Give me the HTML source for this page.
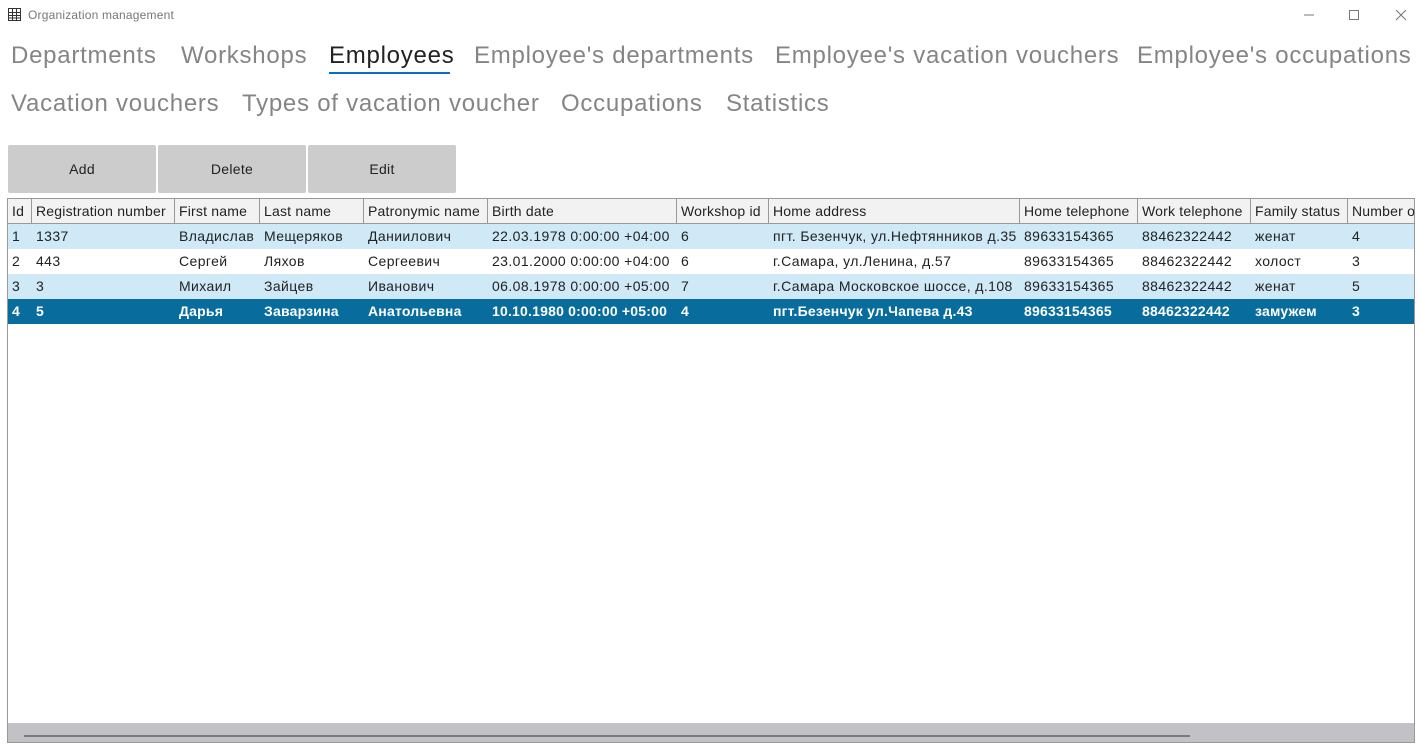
<!DOCTYPE html>
<html><head><meta charset="utf-8"><style>
*{margin:0;padding:0;box-sizing:border-box}
body{width:1420px;height:748px;background:#fff;font-family:"Liberation Sans","DejaVu Sans",sans-serif;position:relative;overflow:hidden;color:#222}
.title{position:absolute;left:28px;top:8px;font-size:12px;color:#777;letter-spacing:0.2px}
.tab{position:absolute;font-size:24px;color:#858585;white-space:nowrap;letter-spacing:0.75px}
.btn{position:absolute;top:145px;width:148px;height:48px;background:#ccc;border-radius:2px;font-size:14px;color:#222;text-align:center;line-height:48px;letter-spacing:0.3px}
.grid{position:absolute;left:7px;top:198px;width:1408px;height:545px;border:1px solid #999;overflow:hidden}
.c{position:absolute;height:25px;line-height:25px;font-size:14px;white-space:nowrap;overflow:hidden;padding-left:4px;letter-spacing:0.4px}
.h{background:#f2f2f2;border-right:1px solid #999;border-bottom:1px solid #999;letter-spacing:0.2px}
</style></head><body>
<svg style="position:absolute;left:8px;top:8px" width="13" height="13" viewBox="0 0 13 13"><rect x=".5" y=".5" width="12" height="12" fill="none" stroke="#333"/><path d="M1 4.5h11M1 7.5h11M1 10h11M4.5 1v11M8.5 1v11" stroke="#333"/></svg>
<div class="title">Organization management</div>
<svg style="position:absolute;left:1300px;top:8px" width="110" height="14"><path d="M4 7h10" stroke="#777"/><rect x="49.5" y="2.5" width="9" height="9" fill="none" stroke="#777"/><path d="M96 2l10 10M106 2l-10 10" stroke="#777"/></svg>
<div class="tab" style="left:11px;top:42px">Departments</div>
<div class="tab" style="left:181px;top:42px">Workshops</div>
<div class="tab" style="left:329px;top:42px;color:#222">Employees</div>
<div style="position:absolute;left:329px;top:72px;width:121px;height:2px;background:#0a6dc4"></div>
<div class="tab" style="left:474px;top:42px">Employee's departments</div>
<div class="tab" style="left:775px;top:42px">Employee's vacation vouchers</div>
<div class="tab" style="left:1137px;top:42px">Employee's occupations</div>
<div class="tab" style="left:11px;top:90px">Vacation vouchers</div>
<div class="tab" style="left:242px;top:90px">Types of vacation voucher</div>
<div class="tab" style="left:561px;top:90px">Occupations</div>
<div class="tab" style="left:726px;top:90px">Statistics</div>
<div class="btn" style="left:8px">Add</div>
<div class="btn" style="left:158px">Delete</div>
<div class="btn" style="left:308px">Edit</div>
<div class="grid">
<div style="position:absolute;left:0;top:25px;width:1408px;height:25px;background:#cfe9f6"></div>
<div style="position:absolute;left:0;top:75px;width:1408px;height:25px;background:#cfe9f6"></div>
<div style="position:absolute;left:0;top:100px;width:1408px;height:25px;background:#086d9c"></div>
<div id="cells"></div>
<div style="position:absolute;left:0;top:524px;width:1408px;height:20px;background:#c1c1c6"></div>
<div style="position:absolute;left:16px;top:536px;width:1166px;height:2px;background:#7a7a7a"></div>
</div>
<script>
var x=[0,24,167,252,356,480,669,761,1012,1130,1243,1340,1500];
var hd=["Id","Registration number","First name","Last name","Patronymic name","Birth date","Workshop id","Home address","Home telephone","Work telephone","Family status","Number of children"];
var r=[["1","1337","Владислав","Мещеряков","Даниилович","22.03.1978 0:00:00 +04:00","6","пгт. Безенчук, ул.Нефтянников д.35","89633154365","88462322442","женат","4"],
["2","443","Сергей","Ляхов","Сергеевич","23.01.2000 0:00:00 +04:00","6","г.Самара, ул.Ленина, д.57","89633154365","88462322442","холост","3"],
["3","3","Михаил","Зайцев","Иванович","06.08.1978 0:00:00 +05:00","7","г.Самара Московское шоссе, д.108","89633154365","88462322442","женат","5"],
["4","5","Дарья","Заварзина","Анатольевна","10.10.1980 0:00:00 +05:00","4","пгт.Безенчук ул.Чапева д.43","89633154365","88462322442","замужем","3"]];
var h="";
for(var i=0;i<12;i++){h+='<div class="c h" style="left:'+x[i]+'px;top:0;width:'+(x[i+1]-x[i])+'px">'+hd[i]+'</div>';
for(var j=0;j<4;j++)h+='<div class="c" style="left:'+x[i]+'px;top:'+(25+j*25)+'px;width:'+(x[i+1]-x[i])+'px;'+(j==3?'color:#fff;font-weight:bold;letter-spacing:0.2px':'')+'">'+r[j][i]+'</div>';}
document.getElementById("cells").innerHTML=h;
</script>
</body></html>
